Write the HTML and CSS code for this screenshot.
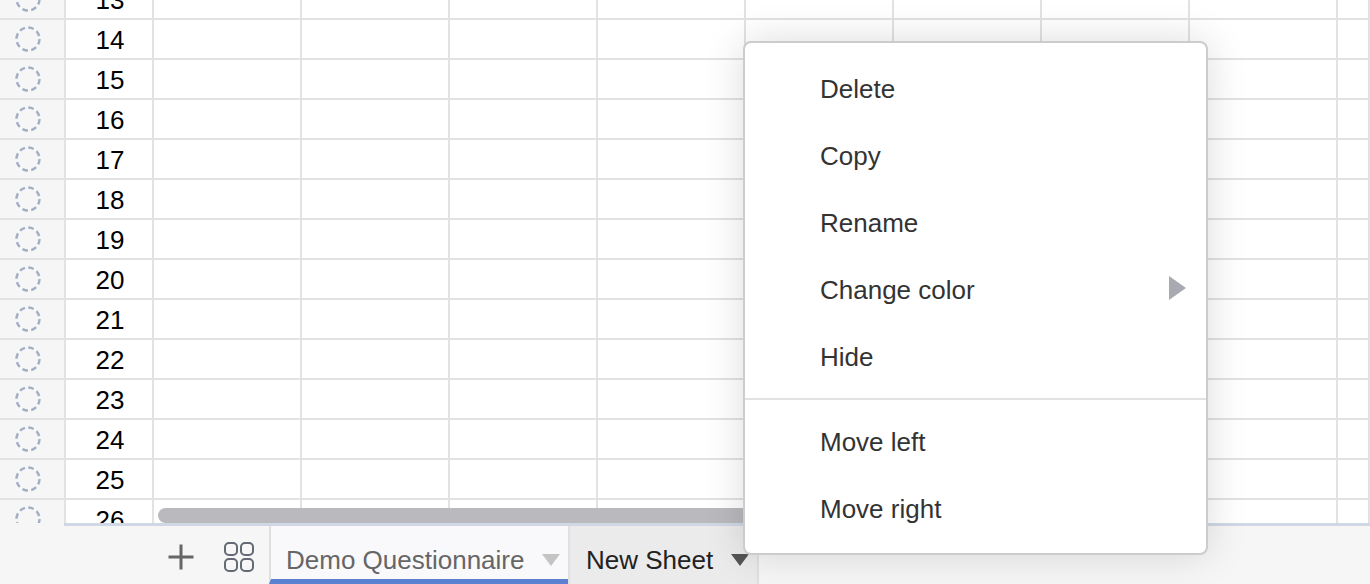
FILE: index.html
```html
<!DOCTYPE html>
<html lang="en">
<head>
  <meta charset="UTF-8">
  <title>Demo Questionnaire</title>
  <link rel="stylesheet" href="styles.css">
</head>
<body>
  <svg class="defs" width="0" height="0">
    <symbol id="ring" viewBox="0 0 26 26">
      <circle cx="13" cy="13" r="11.5" fill="none" stroke="#a3afc3" stroke-width="2.4" stroke-dasharray="5.6 3.43"/>
    </symbol>
  </svg>

  <div class="page">
    <div class="sheet">
      <div class="row"><div class="head"><svg class="ring"><use href="#ring"/></svg></div><div class="num">13</div><div class="cell"></div><div class="cell"></div><div class="cell"></div><div class="cell"></div><div class="cell"></div><div class="cell"></div><div class="cell"></div><div class="cell"></div><div class="cell"></div></div>
      <div class="row"><div class="head"><svg class="ring"><use href="#ring"/></svg></div><div class="num">14</div><div class="cell"></div><div class="cell"></div><div class="cell"></div><div class="cell"></div><div class="cell"></div><div class="cell"></div><div class="cell"></div><div class="cell"></div><div class="cell"></div></div>
      <div class="row"><div class="head"><svg class="ring"><use href="#ring"/></svg></div><div class="num">15</div><div class="cell"></div><div class="cell"></div><div class="cell"></div><div class="cell"></div><div class="cell"></div><div class="cell"></div><div class="cell"></div><div class="cell"></div><div class="cell"></div></div>
      <div class="row"><div class="head"><svg class="ring"><use href="#ring"/></svg></div><div class="num">16</div><div class="cell"></div><div class="cell"></div><div class="cell"></div><div class="cell"></div><div class="cell"></div><div class="cell"></div><div class="cell"></div><div class="cell"></div><div class="cell"></div></div>
      <div class="row"><div class="head"><svg class="ring"><use href="#ring"/></svg></div><div class="num">17</div><div class="cell"></div><div class="cell"></div><div class="cell"></div><div class="cell"></div><div class="cell"></div><div class="cell"></div><div class="cell"></div><div class="cell"></div><div class="cell"></div></div>
      <div class="row"><div class="head"><svg class="ring"><use href="#ring"/></svg></div><div class="num">18</div><div class="cell"></div><div class="cell"></div><div class="cell"></div><div class="cell"></div><div class="cell"></div><div class="cell"></div><div class="cell"></div><div class="cell"></div><div class="cell"></div></div>
      <div class="row"><div class="head"><svg class="ring"><use href="#ring"/></svg></div><div class="num">19</div><div class="cell"></div><div class="cell"></div><div class="cell"></div><div class="cell"></div><div class="cell"></div><div class="cell"></div><div class="cell"></div><div class="cell"></div><div class="cell"></div></div>
      <div class="row"><div class="head"><svg class="ring"><use href="#ring"/></svg></div><div class="num">20</div><div class="cell"></div><div class="cell"></div><div class="cell"></div><div class="cell"></div><div class="cell"></div><div class="cell"></div><div class="cell"></div><div class="cell"></div><div class="cell"></div></div>
      <div class="row"><div class="head"><svg class="ring"><use href="#ring"/></svg></div><div class="num">21</div><div class="cell"></div><div class="cell"></div><div class="cell"></div><div class="cell"></div><div class="cell"></div><div class="cell"></div><div class="cell"></div><div class="cell"></div><div class="cell"></div></div>
      <div class="row"><div class="head"><svg class="ring"><use href="#ring"/></svg></div><div class="num">22</div><div class="cell"></div><div class="cell"></div><div class="cell"></div><div class="cell"></div><div class="cell"></div><div class="cell"></div><div class="cell"></div><div class="cell"></div><div class="cell"></div></div>
      <div class="row"><div class="head"><svg class="ring"><use href="#ring"/></svg></div><div class="num">23</div><div class="cell"></div><div class="cell"></div><div class="cell"></div><div class="cell"></div><div class="cell"></div><div class="cell"></div><div class="cell"></div><div class="cell"></div><div class="cell"></div></div>
      <div class="row"><div class="head"><svg class="ring"><use href="#ring"/></svg></div><div class="num">24</div><div class="cell"></div><div class="cell"></div><div class="cell"></div><div class="cell"></div><div class="cell"></div><div class="cell"></div><div class="cell"></div><div class="cell"></div><div class="cell"></div></div>
      <div class="row"><div class="head"><svg class="ring"><use href="#ring"/></svg></div><div class="num">25</div><div class="cell"></div><div class="cell"></div><div class="cell"></div><div class="cell"></div><div class="cell"></div><div class="cell"></div><div class="cell"></div><div class="cell"></div><div class="cell"></div></div>
      <div class="row"><div class="head"><svg class="ring"><use href="#ring"/></svg></div><div class="num">26</div><div class="cell"></div><div class="cell"></div><div class="cell"></div><div class="cell"></div><div class="cell"></div><div class="cell"></div><div class="cell"></div><div class="cell"></div><div class="cell"></div></div>
      <div class="scrollbar"></div>
    </div>

    <div class="bar">
      <div class="bar-gutter"></div>
      <div class="bar-main">
        <button class="tool tool-add">
          <svg width="28" height="28" viewBox="0 0 28 28"><path d="M14 1.5v25M1.5 14h25" fill="none" stroke="#666" stroke-width="3"/></svg>
        </button>
        <button class="tool tool-all">
          <svg width="32" height="32" viewBox="0 0 32 32" fill="none" stroke="#636873" stroke-width="2">
            <rect x="2" y="2" width="12" height="12" rx="4"/>
            <rect x="18" y="2" width="12" height="12" rx="4"/>
            <rect x="2" y="18" width="12" height="12" rx="4"/>
            <rect x="18" y="18" width="12" height="12" rx="4"/>
          </svg>
        </button>
        <div class="tab tab-on">
          <span class="tab-name">Demo Questionnaire</span>
          <span class="caret"></span>
        </div>
        <div class="tab tab-open">
          <span class="tab-name">New Sheet</span>
          <span class="caret"></span>
        </div>
      </div>
    </div>

    <div class="menu">
      <div class="menu-group">
        <div class="menu-item">Delete</div>
        <div class="menu-item">Copy</div>
        <div class="menu-item">Rename</div>
        <div class="menu-item">Change color<span class="arrow"></span></div>
        <div class="menu-item">Hide</div>
      </div>
      <div class="menu-group menu-group-last">
        <div class="menu-item">Move left</div>
        <div class="menu-item">Move right</div>
      </div>
    </div>
  </div>
</body>
</html>
```

FILE: styles.css
```css
* {
  box-sizing: border-box;
}

body {
  margin: 0;
  font-family: "Liberation Sans", Arial, sans-serif;
  background-color: #fff;
}

.defs {
  display: block;
  height: 0;
}

.page {
  position: relative;
  height: 584px;
  overflow: hidden;
  display: flex;
  flex-direction: column;
}

/* grid */
.sheet {
  position: relative;
  height: 523px;
  overflow: hidden;
}

.row {
  display: grid;
  grid-template-columns: 66px 88px repeat(8, 148px) 1fr;
  grid-template-rows: 40px;
  height: 40px;
}

.row:first-child {
  margin-top: -20px;
}

.head,
.num,
.cell {
  border-right: 2px solid #e2e2e4;
  border-bottom: 2px solid #e2e2e4;
}

.head {
  display: flex;
  align-items: center;
  justify-content: center;
  padding-right: 8px;
  background-color: #f6f6f7;
}

.ring {
  width: 26px;
  height: 26px;
}

.num {
  padding: 2px 0 0 2px;
  font-size: 26px;
  line-height: 36px;
  text-align: center;
  color: #000;
}

.scrollbar {
  position: absolute;
  left: 158px;
  bottom: 0;
  width: 700px;
  height: 15px;
  border-radius: 8px;
  background-color: #b9b9be;
}

/* bottom bar */
.bar {
  flex: 1;
  display: flex;
  background-color: #f6f6f6;
}

.bar-gutter {
  width: 64px;
}

.bar-main {
  flex: 1;
  display: flex;
  border-top: 3px solid #d0d8e6;
}

.tool {
  display: flex;
  align-items: center;
  justify-content: center;
  padding: 0;
  border: 0;
  background: none;
}

.tool-add {
  width: 28px;
  height: 28px;
  margin: 17px 0 0 103px;
}

.tool-all {
  width: 32px;
  height: 32px;
  margin: 15px 0 0 28px;
}

.tab {
  display: flex;
  align-items: flex-start;
  border-left: 2px solid #e0e0e0;
  font-size: 26px;
}

.tab-name {
  line-height: 30px;
  margin-top: 19px;
}

.tab-on {
  width: 299px;
  margin-left: 14px;
  padding-left: 15px;
  background-color: #f9f9fb;
  border-bottom: 5px solid #5b82d2;
  color: #666;
}

.tab-open {
  width: 191px;
  padding-left: 16px;
  background-color: #ebebeb;
  border-right: 2px solid #e0e0e0;
  color: #222;
}

.caret {
  width: 0;
  height: 0;
  margin: 28px 0 0 18px;
  border-left: 9px solid transparent;
  border-right: 9px solid transparent;
  border-top: 12px solid #c4c4c4;
}

.tab-open .caret {
  border-top-color: #555;
}

/* context menu */
.menu {
  position: absolute;
  left: 743px;
  top: 41px;
  width: 465px;
  height: 514px;
  padding-top: 14px;
  border: 2px solid #ccc;
  border-radius: 8px;
  background-color: #fff;
  box-shadow: 0 0 40px rgba(0, 0, 0, 0.14);
}

.menu-group {
  padding-bottom: 6px;
}

.menu-group-last {
  padding-top: 10px;
  padding-bottom: 0;
  border-top: 2px solid #e2e2e2;
}

.menu-item {
  position: relative;
  height: 67px;
  padding-left: 75px;
  font-size: 26px;
  line-height: 64px;
  color: #333;
}

.arrow {
  position: absolute;
  right: 20px;
  top: 18px;
  width: 0;
  height: 0;
  border-top: 12px solid transparent;
  border-bottom: 12px solid transparent;
  border-left: 17px solid #a9a9b2;
}
```
